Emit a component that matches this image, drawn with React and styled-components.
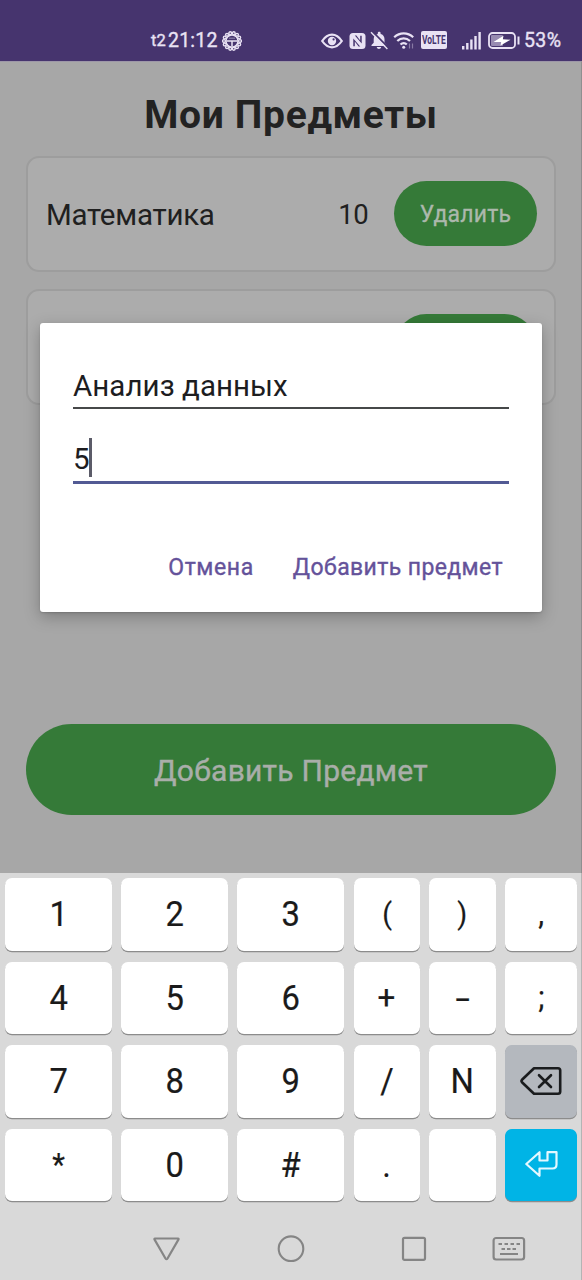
import React from "react";
import styled, { createGlobalStyle } from "styled-components";

const GlobalStyle = createGlobalStyle`
  * { box-sizing: border-box; }
  body { margin: 0; font-family: Roboto, "Noto Sans", sans-serif; background: #a7a7a7; }
`;

const Phone = styled.div`
  position: relative;
  width: 582px;
  height: 1280px;
  display: flex;
  flex-direction: column;
  overflow: hidden;
`;

const StatusBar = styled.header`
  height: 61px;
  flex: none;
  display: flex;
  align-items: center;
  padding: 20px 0 0 151px;
  background: #46346e;
  color: #e9e2f4;
  svg { display: block; flex: none; }
`;

const StatusText = styled.span`
  width: ${(p) => p.$width}px;
  margin-left: ${(p) => p.$before || 0}px;
  font-size: ${(p) => p.$size}px;
  line-height: 22px;
  font-weight: 400;
  -webkit-text-stroke: 0.35px currentColor;
  letter-spacing: ${(p) => p.$spacing || 0}px;
  white-space: nowrap;
`;

const StatusIcon = styled.svg`
  margin-left: ${(p) => p.$before || 0}px;
`;

const VolteBadge = styled.span`
  width: 26px;
  height: 18px;
  margin-left: 6px;
  margin-top: -1px;
  border-radius: 2px;
  background: #e9e2f4;
  color: #46346e;
  display: flex;
  align-items: center;
  justify-content: center;
  span {
    font-size: 12px;
    font-weight: 700;
    line-height: 18px;
    transform: scale(0.7, 1.08);
  }
`;

const Screen = styled.main`
  height: 812px;
  flex: none;
  display: flex;
  flex-direction: column;
  padding: 28px 25px 58px 26px;
  background: #a7a7a7;
  border-top: 1px solid #9d97a8;
  border-right: 1px solid #8f8f8f;
`;

const Title = styled.h1`
  margin: 0 0 16px;
  font-size: 39px;
  line-height: 50px;
  font-weight: 700;
  letter-spacing: 0.65px;
  text-align: center;
  color: #222;
`;

const Cards = styled.div`
  flex: 1;
  display: flex;
  flex-direction: column;
  gap: 17px;
`;

const Card = styled.section`
  height: 116px;
  display: flex;
  align-items: center;
  padding: 0 17px 0 18px;
  border: 2px solid #9d9d9d;
  border-radius: 13px;
  background: #acacac;
  color: #202020;
`;

const Subject = styled.span`
  flex: 1;
  padding-top: 2px;
  font-size: 29.5px;
  line-height: 40px;
  letter-spacing: -0.25px;
`;

const Count = styled.span`
  padding-top: 2px;
  font-size: 27.5px;
  line-height: 40px;
  letter-spacing: -0.6px;
  margin-right: 26px;
`;

const DeleteButton = styled.button`
  width: 143px;
  height: 65px;
  margin-top: -1px;
  border: 0;
  padding: 3px 0 0;
  border-radius: 33px;
  background: #357a38;
  color: #acb8ac;
  font: 400 23px/30px Roboto, sans-serif;
  -webkit-text-stroke: 0.3px currentColor;
  letter-spacing: 0.2px;
`;

const AddButton = styled.button`
  height: 91px;
  border: 0;
  padding: 2px 0 0;
  border-radius: 46px;
  background: #357a38;
  color: #a9aea9;
  font: 400 30px/40px Roboto, sans-serif;
  -webkit-text-stroke: 0.4px currentColor;
  letter-spacing: 0.25px;
`;

const Dialog = styled.div`
  position: absolute;
  left: 40px;
  top: 322.5px;
  width: 501.5px;
  height: 289px;
  padding: 43.5px 32.5px 0 33px;
  border-radius: 3px;
  background: #fff;
  box-shadow: 0 5px 16px rgba(0, 0, 0, 0.25), 0 1px 2px rgba(0, 0, 0, 0.15);
`;

const Field = styled.div`
  height: ${(p) => (p.$active ? 75 : 43)}px;
  display: flex;
  align-items: flex-end;
  border-bottom: ${(p) => (p.$active ? "3px solid #525a94" : "2px solid #464849")};
  padding-bottom: ${(p) => (p.$active ? 2 : 1)}px;
  font-size: 29.5px;
  line-height: 40px;
  letter-spacing: 0.05px;
  color: #1d1d1f;
`;

const Caret = styled.i`
  width: 3px;
  height: 39px;
  margin: 0 0 2px -1px;
  background: #5b5b68;
`;

const Actions = styled.div`
  display: flex;
  justify-content: flex-end;
  gap: 39px;
  padding: 67.5px 6px 0 0;
`;

const Action = styled.button`
  border: 0;
  padding: 0;
  background: none;
  color: #64529a;
  font: 400 23px/32px Roboto, sans-serif;
  -webkit-text-stroke: 0.35px currentColor;
  letter-spacing: ${(p) => p.$spacing}px;
`;

const Keyboard = styled.div`
  height: 337px;
  flex: none;
  display: grid;
  grid-template-columns: 106.7px 107px 107px 66.3px 66.6px 72px;
  grid-auto-rows: 72.5px;
  column-gap: 9.3px;
  row-gap: 11.1px;
  padding: 5px 0 0 5px;
  background: #d9d9d9;
  border-right: 1px solid #b4b4b4;
`;

const keyColors = { plain: "#fff", muted: "#b4b8be", accent: "#00b4e6" };

const Key = styled.div`
  display: flex;
  align-items: center;
  justify-content: center;
  border-radius: 7px;
  background: ${(p) => keyColors[p.$tone || "plain"]};
  box-shadow: 0 1.3px 0 #8c8c8c;
  color: #1a1a1a;
`;

const Glyph = styled.span`
  font-size: ${(p) => p.$size || 34.5}px;
  line-height: 40px;
  -webkit-text-stroke: 0.2px currentColor;
  transform: scaleX(${(p) => p.$stretch || 0.95});
`;

const NavBar = styled.nav`
  flex: 1;
  display: flex;
  align-items: flex-start;
  padding: 25px 0 0 152px;
  background: #d9d9d9;
  border-right: 1px solid #b4b4b4;
  color: #858585;
  svg { flex: none; }
`;

const NavIcon = styled.svg`
  margin-right: ${(p) => p.$after || 0}px;
`;

function BadgeIcon() {
  const teeth = Array.from({ length: 14 }, (_, i) => {
    const a = (i / 14) * Math.PI * 2;
    return <circle key={i} cx={10 + 8 * Math.cos(a)} cy={10 + 8 * Math.sin(a)} r="1.4" />;
  });
  return (
    <StatusIcon $before={4} width="20" height="20" viewBox="0 0 20 20" fill="none" stroke="currentColor" strokeWidth="1.4">
      {teeth}
      <circle cx="10" cy="10" r="6" strokeWidth="1.4" />
      <path d="M4.5 10h11M10 10v5" strokeWidth="1.5" />
      <path d="M7 7.2h6" strokeWidth="1" opacity=".5" />
    </StatusIcon>
  );
}

function EyeIcon() {
  return (
    <StatusIcon $before={79} width="22" height="16" viewBox="0 0 22 16" fill="none" stroke="currentColor" strokeWidth="2.2">
      <path d="M1.2 8C4 3.8 7.2 1.7 11 1.7S18 3.8 20.8 8C18 12.2 14.8 14.3 11 14.3S4 12.2 1.2 8z" />
      <circle cx="11" cy="8" r="4.2" fill="currentColor" stroke="none" />
      <circle cx="12.6" cy="6.4" r="1.1" fill="#46346e" stroke="none" />
    </StatusIcon>
  );
}

function NfcIcon() {
  return (
    <StatusIcon $before={6} width="17" height="16" viewBox="0 0 17 16">
      <rect x=".5" width="16" height="16" rx="3.5" fill="currentColor" />
      <path d="M4.3 5.4V13.2H5.8V8.6L9.6 13.6H11.2zM12.7 10.6V2.8H11.2V7.4L7.4 2.400H5.800z" fill="#46346e" />
    </StatusIcon>
  );
}

function BellOffIcon() {
  return (
    <StatusIcon $before={4} width="19" height="19" viewBox="0 0 19 19">
      <path d="M1.5 15h15v-1l-2-2.200V8c0-2.600-1.600-4.600-3.900-5V2c0-1.600-2.800-1.600-2.800 0v1C5.300 3.600 3.700 5.400 3.700 8v3.800L1.500 14zM6.700 16c.4 2.600 4.100 2.600 4.500 0z" fill="currentColor" />
      <path d="M2.800.8 18.800 17" stroke="#46346e" strokeWidth="1.8" />
      <path d="M1 1.300 17.400 18" stroke="currentColor" strokeWidth="1.4" />
    </StatusIcon>
  );
}

function WifiIcon() {
  return (
    <StatusIcon $before={4} width="22" height="19" viewBox="0 0 22 19" fill="none" stroke="currentColor" strokeWidth="2.2">
      <path d="M1.200 6.200c5.500-5.200 13.500-5.200 19 0M4.300 10c3.700-3.500 9-3.500 12.700 0M7.500 13.500c2-1.900 4.500-1.900 6.300 0" />
      <circle cx="10.7" cy="16.3" r="1.5" fill="currentColor" stroke="none" />
      <path d="M16.500 12.500v5M19.500 12.500v5" strokeWidth="1.2" opacity=".4" />
    </StatusIcon>
  );
}

function SignalIcon() {
  return (
    <StatusIcon $before={15} width="19" height="18" viewBox="0 0 19 18" fill="currentColor">
      <rect x="0" y="14" width="2.4" height="3.5" />
      <rect x="4.1" y="11" width="2.4" height="6.5" />
      <rect x="8.2" y="7.5" width="2.4" height="10" />
      <rect x="12.3" y="4" width="2.4" height="13.5" />
      <rect x="16.4" y="0" width="2.4" height="17.5" />
    </StatusIcon>
  );
}

function BatteryIcon() {
  return (
    <StatusIcon $before={7} width="32" height="17" viewBox="0 0 32 17">
      <rect x="1" y="1" width="26" height="15" rx="3.5" fill="none" stroke="currentColor" strokeWidth="1.8" />
      <rect x="3" y="3" width="12" height="11" rx="1" fill="currentColor" opacity=".5" />
      <path d="M5.500 10 15.500 3.700 14.800 7.300 22.500 7.700 12.500 13.600 13.200 10z" fill="#fff" />
      <path d="M30.500 4.500v8" stroke="currentColor" strokeWidth="2" />
    </StatusIcon>
  );
}

function BackspaceIcon() {
  return (
    <svg width="42" height="28" viewBox="0 0 42 28" fill="none" stroke="#1a1c1e" strokeWidth="2.6" strokeLinejoin="round" strokeLinecap="round">
      <path d="M14 1.300H38Q40.200 1.300 40.200 3.500V24.500Q40.200 26.700 38 26.700H14L2 15.200Q1 14 2 12.800z" />
      <path d="M19 8.200 31 20M31 8.200 19 20" />
    </svg>
  );
}

function EnterIcon() {
  return (
    <svg width="34" height="28" viewBox="0 0 34 28" fill="none" stroke="#e4f8ff" strokeWidth="2.2" strokeLinejoin="round">
      <path d="M2.300 13 15.500 1.200V9.500H23.500V1.200H32.500V13.500Q32.500 17.500 28.500 17.500H15.500V24.800z" />
    </svg>
  );
}

const rows = [
  ["1", "2", "3", "(", ")", ","],
  ["4", "5", "6", "+", "-", ";"],
  ["7", "8", "9", "/", "N", "del"],
  ["*", "0", "#", ".", "", "enter"],
];

const glyphSizes = { "(": 30, ")": 30, "+": 33, "*": 31, ",": 31, ";": 31 };
const glyphStretch = { "-": 1.5 };

function KeyCap({ value }) {
  if (value === "del") return <Key $tone="muted"><BackspaceIcon /></Key>;
  if (value === "enter") return <Key $tone="accent"><EnterIcon /></Key>;
  return (
    <Key>
      <Glyph $size={glyphSizes[value]} $stretch={glyphStretch[value]}>{value}</Glyph>
    </Key>
  );
}

export default function App() {
  return (
    <Phone>
      <GlobalStyle />
      <StatusBar>
        <StatusText $size={16.5} $width={17}>t2</StatusText>
        <StatusText $size={19.5} $width={50} $spacing={0.2}>21:12</StatusText>
        <BadgeIcon />
        <EyeIcon />
        <NfcIcon />
        <BellOffIcon />
        <WifiIcon />
        <VolteBadge><span>VoLTE</span></VolteBadge>
        <SignalIcon />
        <BatteryIcon />
        <StatusText $size={19.5} $width={40} $before={4} $spacing={0.4}>53%</StatusText>
      </StatusBar>

      <Screen>
        <Title>Мои Предметы</Title>
        <Cards>
          <Card>
            <Subject>Математика</Subject>
            <Count>10</Count>
            <DeleteButton>Удалить</DeleteButton>
          </Card>
          <Card>
            <Subject />
            <DeleteButton />
          </Card>
        </Cards>
        <AddButton>Добавить Предмет</AddButton>
      </Screen>

      <Keyboard>
        {rows.flat().map((value, i) => <KeyCap key={i} value={value} />)}
      </Keyboard>

      <NavBar>
        <NavIcon $after={96} width="29" height="27" viewBox="0 0 29 27" fill="none" stroke="currentColor" strokeWidth="2.2" strokeLinejoin="round">
          <path d="M3 3.500H26Q27 3.500 26.400 4.600L15.500 23.500Q14.500 25 13.500 23.500L2.600 4.600Q2 3.500 3 3.500z" />
        </NavIcon>
        <NavIcon $after={96} width="28" height="28" viewBox="0 0 28 28" fill="none" stroke="currentColor" strokeWidth="2.1">
          <circle cx="14" cy="13.7" r="12.3" />
        </NavIcon>
        <NavIcon $after={65} width="26" height="27" viewBox="0 0 26 27" fill="none" stroke="currentColor" strokeWidth="2.2">
          <rect x="2" y="2.8" width="22" height="22" rx="1.5" />
        </NavIcon>
        <NavIcon width="34" height="27" viewBox="0 0 34 27" fill="none" stroke="currentColor" strokeWidth="2">
          <rect x="1.6" y="3" width="30.5" height="21.5" rx="2.5" strokeWidth="2.2" />
          <path d="M6.500 9H28" strokeDasharray="3.5 2.5" />
          <path d="M9.500 14H25" strokeDasharray="3.5 2" />
          <path d="M8 19H26" />
        </NavIcon>
      </NavBar>

      <Dialog role="dialog">
        <Field>Анализ данных</Field>
        <Field $active>5<Caret /></Field>
        <Actions>
          <Action $spacing={0.6}>Отмена</Action>
          <Action $spacing={0.4}>Добавить предмет</Action>
        </Actions>
      </Dialog>
    </Phone>
  );
}
